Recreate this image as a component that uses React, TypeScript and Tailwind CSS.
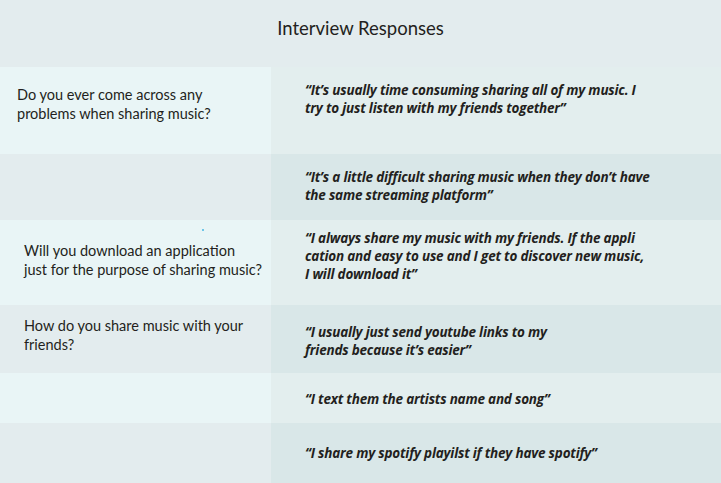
const rows = [
  {
    q: ["Do you ever come across any", "problems when sharing music?"],
    qx: "pl-[17px]",
    qt: "pt-[19px]",
    a: ["“It’s usually time consuming sharing all of my music. I", "try to just listen with my friends together”"],
    at: "pt-[14px]",
    h: "h-[87px]",
    odd: true,
  },
  {
    q: [],
    qx: "pl-[17px]",
    qt: "pt-[19px]",
    a: ["“It’s a little difficult sharing music when they don’t have", "the same streaming platform”"],
    at: "pt-[14px]",
    h: "h-[66px]",
    odd: false,
  },
  {
    q: ["Will you download an application", "just for the purpose of sharing music?"],
    qx: "pl-[24px]",
    qt: "pt-[22px]",
    a: [
      "“I always share my music with my friends. If the appli",
      "cation and easy to use and I get to discover new music,",
      "I will download it”",
    ],
    at: "pt-[9px]",
    h: "h-[85px]",
    odd: true,
    dot: true,
  },
  {
    q: ["How do you share music with your", "friends?"],
    qx: "pl-[24px]",
    qt: "pt-[12px]",
    a: ["“I usually just send youtube links to my", "friends because it’s easier”"],
    at: "pt-[18px]",
    h: "h-[68px]",
    odd: false,
  },
  {
    q: [],
    qx: "pl-[24px]",
    qt: "pt-[12px]",
    a: ["“I text them the artists name and song”"],
    at: "pt-[17px]",
    h: "h-[50px]",
    odd: true,
  },
  {
    q: [],
    qx: "pl-[24px]",
    qt: "pt-[12px]",
    a: ["“I share my spotify playilst if they have spotify”"],
    at: "pt-[21px]",
    h: "h-[60px]",
    odd: false,
  },
];

export default function App() {
  return (
    <div className="w-[721px] h-[483px] overflow-hidden bg-[#e3ecee] font-['Lato',sans-serif] text-[#231f20]">
      <div className="h-[67px] flex items-start justify-center pt-[17px]">
        <h1 className="text-[18.5px] leading-[22px]">Interview Responses</h1>
      </div>
      {rows.map((r, i) => (
        <div key={i} className={`flex ${r.h}`}>
          <div
            className={`relative w-[271px] shrink-0 ${r.qx} ${r.qt} ${r.odd ? "bg-[#e9f5f6]" : "bg-[#e3ecee]"}`}
          >
            {r.dot && <span className="absolute left-[202px] top-[9px] h-[2px] w-[2px] bg-[#6ec6e8]" />}
            {r.q.map((l, j) => (
              <p key={j} className="text-[14.5px] leading-[18.5px] whitespace-nowrap">
                {l}
              </p>
            ))}
          </div>
          <div className={`flex-1 pl-[34px] ${r.at} ${r.odd ? "bg-[#e3eeee]" : "bg-[#d9e7e8]"}`}>
            {r.a.map((l, j) => (
              <p
                key={j}
                className="font-['Open_Sans',sans-serif] text-[13.5px] leading-[18px] font-bold italic tracking-[-0.2px] whitespace-nowrap"
              >
                {l}
              </p>
            ))}
          </div>
        </div>
      ))}
    </div>
  );
}
